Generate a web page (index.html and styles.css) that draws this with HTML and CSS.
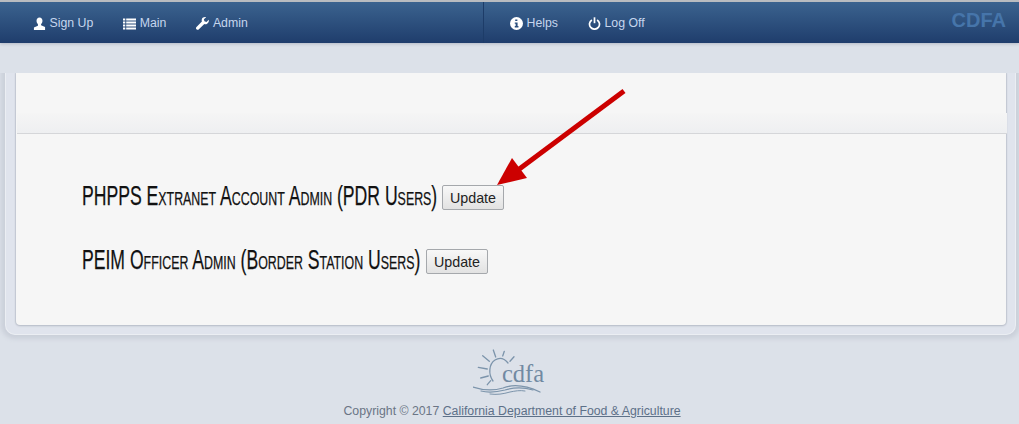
FILE: index.html
```html
<!DOCTYPE html>
<html lang="en">
<head>
<meta charset="utf-8">
<title>CDFA Admin</title>
<link rel="stylesheet" href="styles.css">
</head>
<body>
<header class="topbar">
  <nav class="nav nav-left">
    <a class="nav-item"><svg class="ico" viewBox="0 0 14 14"><path d="M7 .5c2 0 3.200 1.500 3.200 3.500 0 1.500-.6 2.800-1.500 3.600v1.200l4.300 2V14H1v-2.700l4.300-2V7.600C4.400 6.800 3.800 5.500 3.800 4 3.800 2 5 .5 7 .5z" fill="#fff"/></svg>Sign Up</a>
    <a class="nav-item"><svg class="ico" viewBox="0 0 13 12"><path d="M0 1h2.300v2H0zM3.200 1H13v2H3.200zM0 4h2.300v2H0zM3.200 4H13v2H3.200zM0 7h2.300v2H0zM3.200 7H13v2H3.200zM0 10h2.300v2H0zM3.200 10H13v2H3.200z" fill="#fff"/></svg>Main</a>
    <a class="nav-item"><svg class="ico" viewBox="0 0 13 13"><path d="M12.700 2.700 10.500 4.900 8.400 4.300 7.900 2.300 10.100.2C8.400-.3 6.500.4 5.900 2c-.3.900-.3 1.700 0 2.500L.5 9.900c-.7.700-.7 1.700 0 2.400s1.700.7 2.400 0l5.400-5.400c.8.300 1.600.3 2.500 0 1.700-.7 2.400-2.600 1.900-4.200z" fill="#fff"/></svg>Admin</a>
  </nav>
  <nav class="nav nav-right">
    <a class="nav-item"><svg class="ico" viewBox="0 0 12 12"><circle cx="6" cy="6" r="6" fill="#fff"/><path d="M4.800 2.200h2v1.600h-2zM4.400 5h2.600v3.400h.8v1.200H4.400V8.400h.8V6.200h-.8z" fill="#2b4f7e"/></svg>Helps</a>
    <a class="nav-item"><svg class="ico" viewBox="0 0 12 13"><path d="M3.400 2.900a5 5 0 1 0 5.200 0" fill="none" stroke="#fff" stroke-width="1.700"/><path d="M6 .3v5.900" stroke="#fff" stroke-width="1.700"/></svg>Log Off</a>
  </nav>
  <div class="brand">CDFA</div>
</header>

<main class="shell">
  <section class="card">
    <div class="card-top"></div>
    <div class="band"></div>
    <div class="card-body">
      <div class="row">
        <h2 class="row-title row-title-pdr"><span class="squeeze">PHPPS Extranet Account Admin (PDR Users)</span></h2>
        <button class="btn" type="button">Update</button>
      </div>
      <div class="row">
        <h2 class="row-title row-title-peim"><span class="squeeze">PEIM Officer Admin (Border Station Users)</span></h2>
        <button class="btn" type="button">Update</button>
      </div>
    </div>
  </section>
</main>

<svg class="arrow" viewBox="0 0 1019 424" aria-hidden="true">
  <path d="M624 91 518 170" stroke="#cc0000" stroke-width="5" fill="none"/>
  <path d="M497 185 512 158 527 178z" fill="#cc0000"/>
</svg>

<footer class="footer">
  <svg class="logo" viewBox="0 0 74 50" aria-hidden="true">
    <g fill="none" stroke="#7c94ab" stroke-linecap="round">
      <path d="M20 32C15 25 16 15 22 11 26 8.500 31 9 35 14" stroke-width="1.300"/>
      <path d="M20.300 1 22.700 8M31.300 2.300 29.700 7M41 7.700 37 12.300M9.700 6.700 16.300 12.300M5.300 18.300 14.300 20M7.700 29 15.300 27M14.300 35.700 17.700 31.700" stroke-width="1.300"/>
      <path d="M0 38C12 42 20 42 30 39 40 35 52 36 67 43" stroke-width="1.300"/>
      <path d="M8 42C16 44 24 43 32 41 42 38 50 38 60 41" stroke-width="1.200"/>
      <path d="M17 45C24 46 30 45 37 43 42 42 47 41 52 42" stroke-width="1"/>
    </g>
    <text x="29" y="33" class="logo-text">cdfa</text>
  </svg>
  <p class="copy">Copyright © 2017 <a class="copy-link">California Department of Food &amp; Agriculture</a></p>
</footer>
</body>
</html>
```

FILE: styles.css
```css
* { box-sizing: border-box; }
html, body { margin: 0; height: 424px; overflow: hidden; }
body {
  position: relative;
  background: #dce1e9;
  font-family: "Liberation Sans", Arial, sans-serif;
}
.topbar {
  height: 43px;
  border-top: 2px solid #b9bcc0;
  background: linear-gradient(#3b638f, #1f3d6c);
  display: flex;
  align-items: center;
  color: #c6d6ee;
  font-size: 12.300px;
  box-shadow: 0 1px 3px rgba(90,100,120,.3);
}
.nav { display: flex; height: 100%; align-items: center; }
.nav-left { width: 484px; padding-left: 33px; gap: 30px; border-right: 1px solid #1d3c68; }
.nav-right { padding-left: 26px; gap: 30px; }
.nav-item { display: flex; align-items: center; gap: 3.500px; }
.ico { width: 13px; height: 13px; display: block; margin-top: 2px; }
.brand {
  margin-left: auto;
  margin-right: 13px;
  margin-top: -4px;
  color: #4675aa;
  font-size: 20px;
  font-weight: 700;
}
.shell {
  margin: 30px 3px 0 5px;
  height: 262px;
  padding: 0 9px 10px 10px;
  background: #e0e4ed;
  border: solid #ebeef3;
  border-width: 0 1px 1px;
  border-radius: 0 0 10px 10px;
  box-shadow: 0 0 4px 4px #cbd0da;
  clip-path: inset(0 -10px -10px -10px);
}
.card {
  height: 252px;
  background: #f6f6f6;
  border-radius: 0 0 4px 4px;
  box-shadow: 0 1px 2px #b4bac6, -1px 0 1px #c8cdd6, 1px 0 1px #c8cdd6;
  display: flex;
  flex-direction: column;
}
.card-top { height: 40px; }
.band {
  height: 21px;
  margin: 0 -1px 0 1px;
  background: linear-gradient(#f5f5f5, #eeeff1);
  border-bottom: 1px solid #d5d6d9;
}
.card-body { padding: 47px 0 0 66px; display: flex; flex-direction: column; gap: 34px; }
.row { display: flex; align-items: center; gap: 5px; height: 30px; }
.row-title {
  margin: 0;
  font-weight: 400;
  font-size: 27px;
  font-variant: small-caps;
  color: #111;
  white-space: nowrap;
}
.row-title-pdr { width: 355px; }
.row-title-peim { width: 339px; }
.squeeze {
  display: inline-block;
  transform: scaleX(.652);
  transform-origin: left center;
  -webkit-text-stroke: .25px #111;
}
.btn {
  height: 25px;
  width: 62px;
  padding: 0;
  font: 14.300px "Liberation Sans", Arial, sans-serif;
  color: #222;
  background: linear-gradient(#f8f8f8, #e2e2e2);
  border: 1px solid #a5a8ac;
  border-radius: 2px;
  margin-top: 3px;
}
.arrow { position: absolute; left: 0; top: 0; width: 1019px; height: 424px; pointer-events: none; }
.footer { display: flex; flex-direction: column; align-items: center; padding-top: 14px; }
.logo { width: 74px; height: 50px; display: block; }
.logo-text { font-family: "Liberation Serif", serif; font-size: 24.500px; fill: #7189a2; }
.copy { margin: 5px 0 0 5px; font-size: 12.300px; color: #6b7585; }
.copy-link { color: #5d7088; text-decoration: underline; }
```
